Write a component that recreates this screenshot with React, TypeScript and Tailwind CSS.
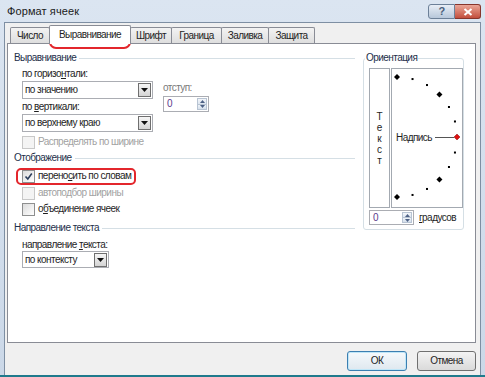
import clsx from 'clsx';

function Triangle() {
    return (
        <svg width="7" height="4" viewBox="0 0 7 4">
            <path d="M0 0h7L3.5 4z" fill="#111" />
        </svg>
    );
}

function Combo({ value, className }: { value: string; className: string }) {
    return (
        <div
            className={clsx(
                'flex items-center justify-between border border-[#abadb3] bg-white pl-[2px] pr-px',
                className
            )}
        >
            <span>{value}</span>
            <span className="flex h-[14px] w-[13px] items-center justify-center border border-[#6f6f6f] bg-gradient-to-b from-[#f6f6f6] to-[#d4d4d4]">
                <Triangle />
            </span>
        </div>
    );
}

function Spin({ className }: { className: string }) {
    return (
        <div className={clsx('flex border border-[#abadb3] bg-white', className)}>
            <span className="flex flex-1 items-center pl-[3px] text-[#5b3a8c]">0</span>
            <span className="my-px mr-px flex w-[10px] flex-col border border-[#b8c4d3]">
                <span className="flex flex-1 items-center justify-center border-b border-[#b8c4d3] bg-gradient-to-b from-[#f3f6fa] to-[#dde5ef]">
                    <svg width="5" height="3" viewBox="0 0 5 3">
                        <path d="M0 3h5L2.5 0z" fill="#4d6185" />
                    </svg>
                </span>
                <span className="flex flex-1 items-center justify-center bg-gradient-to-b from-[#eef3f8] to-[#d6e0ec]">
                    <svg width="5" height="3" viewBox="0 0 5 3">
                        <path d="M0 0h5L2.5 3z" fill="#4d6185" />
                    </svg>
                </span>
            </span>
        </div>
    );
}

function Check({
    checked,
    disabled,
    className,
    children,
}: {
    checked?: boolean;
    disabled?: boolean;
    className?: string;
    children: React.ReactNode;
}) {
    return (
        <div className={clsx('flex h-[16px] items-center gap-[3px]', className)}>
            <span
                className={clsx(
                    'flex h-[13px] w-[13px] items-center justify-center border',
                    disabled
                        ? 'border-[#c8c8c8] bg-[#f4f4f4]'
                        : 'border-[#8e8f8f] bg-gradient-to-br from-[#dcdcdc] to-white'
                )}
            >
                {checked && (
                    <svg width="9" height="9" viewBox="0 0 9 9">
                        <path d="M1.5 4.5L3.8 7L7.8 1.5" fill="none" stroke="#2c3e5c" strokeWidth="1.6" />
                    </svg>
                )}
            </span>
            <span className={disabled ? 'text-[#a2a2a2]' : ''}>{children}</span>
        </div>
    );
}

function GroupTitle({ className, children }: { className?: string; children: React.ReactNode }) {
    return (
        <div className={clsx('flex h-[14px] items-center gap-[3px]', className)}>
            <span className="text-[#1d2f4a]">{children}</span>
            <span className="h-px flex-1 bg-[#d5dfe5]" />
        </div>
    );
}

function Dial() {
    const cx = 5;
    const cy = 68;
    const r = 60;
    const marks = [];
    for (let a = 90; a >= -90; a -= 15) {
        if (a === 0) continue;
        const x = cx + r * Math.cos((a * Math.PI) / 180);
        const y = cy - r * Math.sin((a * Math.PI) / 180);
        if (a % 45 === 0) {
            marks.push(
                <polygon key={a} points={`${x},${y - 3} ${x + 3},${y} ${x},${y + 3} ${x - 3},${y}`} fill="#000" />
            );
        } else {
            marks.push(<rect key={a} x={x - 1} y={y - 1} width="2" height="2" fill="#000" />);
        }
    }
    return (
        <svg className="absolute inset-0" width="70" height="138" viewBox="0 0 70 138">
            {marks}
            <line x1="43" y1="68.5" x2="62" y2="68.5" stroke="#555" strokeWidth="1" />
            <polygon points="65,65 68,68 65,71 62,68" fill="#e01010" stroke="#7a1010" strokeWidth="0.5" />
        </svg>
    );
}

const tabs = [
    { label: 'Число', w: 'w-[40px]' },
    { label: 'Выравнивание', w: 'w-[82px]', active: true },
    { label: 'Шрифт', w: 'w-[42px]' },
    { label: 'Граница', w: 'w-[51px]' },
    { label: 'Заливка', w: 'w-[48px]' },
    { label: 'Защита', w: 'w-[47px]' },
];

export default function App() {
    return (
        <div className="relative flex h-[377px] w-[485px] flex-col overflow-hidden bg-gradient-to-b from-[#dbe5f1] to-[#cbd8e8] font-['Liberation_Sans',Arial,sans-serif] text-[10px] leading-[14px] tracking-[-0.55px] text-[#1e1e1e]">
            {/* Title bar */}
            <div className="flex h-[22px] shrink-0 items-start justify-between pl-[7px] pr-[4px]">
                <span className="mt-[5px] text-[11px] leading-[13px] tracking-[0.1px] text-[#1a1a1a]">Формат ячеек</span>
                <div className="mt-[4px] flex h-[15px]">
                    <div className="flex w-[27px] items-center justify-center rounded-l-[3px] border border-[#6c8098] bg-gradient-to-b from-[#e8eef6] to-[#b7c7da] text-[11px] font-bold leading-none text-[#4a5f7c]">
                        ?
                    </div>
                    <div className="flex w-[26px] items-center justify-center rounded-r-[3px] border border-l-0 border-[#86352c] bg-gradient-to-b from-[#eaa597] to-[#c24e3d]">
                        <svg width="10" height="8" viewBox="0 0 10 8">
                            <path d="M1.5 1L8.5 7M8.5 1L1.5 7" stroke="#fff" strokeWidth="2" />
                        </svg>
                    </div>
                </div>
            </div>

            {/* Client area */}
            <div className="mx-[4px] flex flex-1 flex-col border-x border-t border-[#7e8fa3] bg-[#f0f0f0]">
                <div className="ml-[2px] mt-[2px] w-[469px]">
                    {/* Tabs */}
                    <div className="flex h-[18px] items-end pl-[3px]">
                        {tabs.map((t, i) => (
                            <div
                                key={t.label}
                                className={clsx(
                                    'flex items-center justify-center rounded-t-[2px] border border-b-0 border-[#898c95]',
                                    t.w,
                                    i > 0 && '-ml-px',
                                    t.active
                                        ? 'relative z-10 -mb-px h-[19px] bg-white'
                                        : 'h-[16px] bg-gradient-to-b from-[#f3f3f3] to-[#dedede]'
                                )}
                            >
                                {t.label}
                            </div>
                        ))}
                    </div>

                    {/* Panel */}
                    <div className="flex h-[300px] border border-[#898c95] bg-white">
                        {/* Left column */}
                        <div className="flex w-[347px] flex-col pl-[6px] pt-[7px]">
                            <GroupTitle>Выравнивание</GroupTitle>
                            <div className="mt-[2px] flex pl-[8px]">
                                <div className="flex w-[131px] flex-col">
                                    <span className="h-[14px]">
                                        по горизо<span className="underline">н</span>тали:
                                    </span>
                                    <Combo value="по значению" className="h-[18px] w-[131px]" />
                                    <span className="mt-[1px] h-[14px]">
                                        по <span className="underline">в</span>ертикали:
                                    </span>
                                    <Combo value="по верхнему краю" className="h-[18px] w-[131px]" />
                                </div>
                                <div className="ml-[10px] flex flex-col pt-[14px]">
                                    <span className="h-[14px] text-[#7a7a7a]">отступ:</span>
                                    <Spin className="mt-[1px] h-[16px] w-[46px]" />
                                </div>
                            </div>
                            <Check disabled className="ml-[8px] mt-[2px]">
                                Распределять по ширине
                            </Check>

                            <GroupTitle className="mt-[1px]">Отображение</GroupTitle>
                            <Check checked className="ml-[8px] mt-[3px]">
                                перено<span className="underline">с</span>ить по словам
                            </Check>
                            <Check disabled className="ml-[8px] mt-[1px]">
                                автоподбор ширины
                            </Check>
                            <Check className="ml-[8px]">
                                о<span className="underline">б</span>ъединение ячеек
                            </Check>

                            <GroupTitle className="mt-[4px]">Направление текста</GroupTitle>
                            <span className="ml-[8px] mt-[3px] h-[13px] leading-[13px]">
                                направление <span className="underline">т</span>екста:
                            </span>
                            <Combo value="по контексту" className="ml-[8px] h-[17px] w-[87px]" />
                        </div>

                        {/* Orientation */}
                        <fieldset className="ml-[8px] mt-[7px] self-start rounded-[3px] border border-[#d5dfe5] pb-[4px]">
                            <legend className="ml-px px-px leading-[14px] text-[#1d2f4a]">Ориентация</legend>
                            <div className="ml-[5px] mt-[3px] flex gap-px">
                                <div className="flex h-[140px] w-[21px] flex-col items-center justify-center border border-[#a3a9b1] leading-[11px] tracking-normal">
                                    <span>Т</span>
                                    <span>е</span>
                                    <span>к</span>
                                    <span>с</span>
                                    <span>т</span>
                                </div>
                                <div className="relative flex h-[140px] w-[72px] items-center border border-[#a3a9b1] pl-[4px]">
                                    <Dial />
                                    <span className="relative">Надпись</span>
                                </div>
                            </div>
                            <div className="ml-[5px] mr-[6px] mt-[2px] flex items-center">
                                <Spin className="h-[15px] w-[45px]" />
                                <span className="ml-[5px]">
                                    <span className="underline">г</span>радусов
                                </span>
                            </div>
                        </fieldset>
                    </div>
                </div>

                {/* Buttons */}
                <div className="mt-[8px] flex justify-end gap-[10px] pr-[4px]">
                    <div className="flex h-[20px] w-[60px] items-center justify-center rounded-[3px] border border-[#3c7fb1] bg-gradient-to-b from-[#f5f9fc] to-[#dfe8ef] shadow-[inset_0_0_0_1px_#bfe6f8]">
                        ОК
                    </div>
                    <div className="flex h-[20px] w-[59px] items-center justify-center rounded-[3px] border border-[#707070] bg-gradient-to-b from-[#f3f3f3] to-[#dadada]">
                        Отмена
                    </div>
                </div>
            </div>
            <div className="h-[2px] shrink-0 bg-[#1f7a8c]" />

            {/* Red annotation marks */}
            <div className="pointer-events-none absolute left-[49px] top-[26px] h-[23px] w-[82px] rounded-[7px] border-2 border-[#e3262c]" />
            <div className="pointer-events-none absolute left-[16px] top-[168px] h-[17px] w-[120px] rounded-[5px] border-2 border-[#e3262c]" />
        </div>
    );
}
